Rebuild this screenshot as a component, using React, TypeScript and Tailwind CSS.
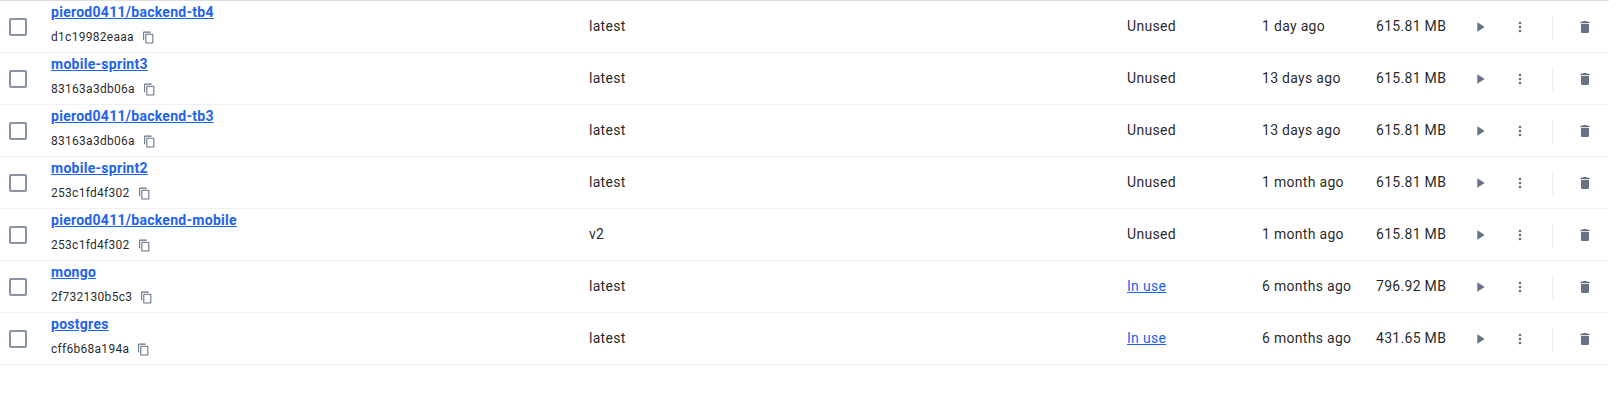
import React from "react";

type Image = {
  name: string;
  id: string;
  tag: string;
  inUse: boolean;
  created: string;
  size: string;
};

const images: Image[] = [
  { name: "pierod0411/backend-tb4", id: "d1c19982eaaa", tag: "latest", inUse: false, created: "1 day ago", size: "615.81 MB" },
  { name: "mobile-sprint3", id: "83163a3db06a", tag: "latest", inUse: false, created: "13 days ago", size: "615.81 MB" },
  { name: "pierod0411/backend-tb3", id: "83163a3db06a", tag: "latest", inUse: false, created: "13 days ago", size: "615.81 MB" },
  { name: "mobile-sprint2", id: "253c1fd4f302", tag: "latest", inUse: false, created: "1 month ago", size: "615.81 MB" },
  { name: "pierod0411/backend-mobile", id: "253c1fd4f302", tag: "v2", inUse: false, created: "1 month ago", size: "615.81 MB" },
  { name: "mongo", id: "2f732130b5c3", tag: "latest", inUse: true, created: "6 months ago", size: "796.92 MB" },
  { name: "postgres", id: "cff6b68a194a", tag: "latest", inUse: true, created: "6 months ago", size: "431.65 MB" },
];

function Icon({ d, className }: { d: string; className: string }) {
  return (
    <svg viewBox="0 0 24 24" className={className} fill="currentColor" aria-hidden="true">
      <path d={d} />
    </svg>
  );
}

const COPY = "M16 1H4c-1.1 0-2 .9-2 2v14h2V3h12V1zm3 4H8c-1.1 0-2 .9-2 2v14c0 1.1.9 2 2 2h11c1.1 0 2-.9 2-2V7c0-1.1-.9-2-2-2zm0 16H8V7h11v14z";
const CHECKBOX = "M19 5v14H5V5h14m0-2H5c-1.1 0-2 .9-2 2v14c0 1.1.9 2 2 2h14c1.1 0 2-.9 2-2V5c0-1.1-.9-2-2-2z";
const PLAY = "M8 5v14l11-7z";
const MORE = "M12 8c1.1 0 2-.9 2-2s-.9-2-2-2-2 .9-2 2 .9 2 2 2zm0 2c-1.1 0-2 .9-2 2s.9 2 2 2 2-.9 2-2-.9-2-2-2zm0 6c-1.1 0-2 .9-2 2s.9 2 2 2 2-.9 2-2-.9-2-2-2z";
const TRASH = "M6 19c0 1.1.9 2 2 2h8c1.1 0 2-.9 2-2V7H6v12zM19 4h-3.5l-1-1h-5l-1 1H5v2h14V4z";

function Row({ image }: { image: Image }) {
  return (
    <div className="flex h-[52px] items-center border-b border-[#f1f1f1]">
      <button className="ml-1.5 mt-px w-6 shrink-0 text-[#8993a5]" aria-label="Select">
        <Icon d={CHECKBOX} className="size-6" />
      </button>
      <div className="ml-[21px] flex h-full w-[538px] shrink-0 flex-col">
        <a className="h-[23px] self-start text-sm leading-[23px] font-bold tracking-[0.28px] text-[#1d63ed] underline">
          {image.name}
        </a>
        <div className="mt-0.5 flex h-[22px] items-center text-xs tracking-[0.28px]">
          {image.id}
          <Icon d={COPY} className="ml-2 size-[13px] text-[#677285]" />
        </div>
      </div>
      <div className="-mt-px w-[538px] shrink-0">{image.tag}</div>
      <div className="-mt-px w-[135px] shrink-0">
        {image.inUse ? <a className="text-[#1d63ed] underline">In use</a> : "Unused"}
      </div>
      <div className="-mt-px w-[114px] shrink-0">{image.created}</div>
      <div className="-mt-px w-[96px] shrink-0">{image.size}</div>
      <div className="mt-px flex items-center text-[#677285]">
        <Icon d={PLAY} className="size-4" />
        <Icon d={MORE} className="ml-6 size-4" />
        <div className="ml-6 h-6 w-px bg-[#eeeeee]" />
        <Icon d={TRASH} className="ml-6 size-4" />
      </div>
    </div>
  );
}

export default function App() {
  return (
    <main className="h-[400px] w-full overflow-hidden bg-white font-['Roboto',sans-serif] text-sm tracking-[0.3px] text-black/87">
      <div className="w-[1609px] border-t border-[#dedede]">
        {images.map((image) => (
          <Row key={image.name} image={image} />
        ))}
      </div>
    </main>
  );
}
